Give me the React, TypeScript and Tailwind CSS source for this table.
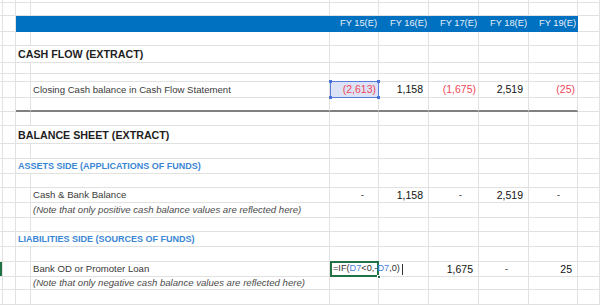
import type { ReactNode } from 'react';

// column template: row-edge | A | B | C | D..H (FY columns) | I
const GRID = 'grid grid-cols-[3px_13px_15px_299px_49px_50px_50px_50px_49px_1fr]';
const CELL = 'border-r border-b border-[#e1e1e1] min-w-0';
const THICK = 'border-r border-r-[#e1e1e1] border-b-2 border-b-[#808080] min-w-0';

function Blank({ n = 1, cls = CELL }: { n?: number; cls?: string }) {
  return (
    <>
      {Array.from({ length: n }).map((_, i) => (
        <div key={i} className={cls} />
      ))}
    </>
  );
}

function Row({ h, children }: { h: string; children?: ReactNode }) {
  return <div className={`${GRID} ${h}`}>{children ?? <Blank n={10} />}</div>;
}

// accounting style: positives leave room for the ")"
function Num({ v, neg = false }: { v: string; neg?: boolean }) {
  return (
    <div className={`${CELL} flex items-center justify-end text-[10.5px] leading-none ${neg ? 'pr-[2px] text-[#f0475a]' : 'pr-[5px] text-[#111]'}`}>
      {v}
    </div>
  );
}

function Dash({ pr }: { pr: string }) {
  return <div className={`${CELL} flex items-center justify-end text-[10px] leading-none text-[#555] ${pr}`}>-</div>;
}

function Label({ children, cls }: { children: ReactNode; cls: string }) {
  return <div className={`${CELL} flex items-center whitespace-nowrap leading-none ${cls}`}>{children}</div>;
}

export default function App() {
  const years = ['FY 15(E)', 'FY 16(E)', 'FY 17(E)', 'FY 18(E)', 'FY 19(E)'];

  return (
    <div className="w-[600px] h-[305px] overflow-hidden bg-white font-['Liberation_Sans',Arial,sans-serif]">
      <Row h="h-[3px]" />
      <Row h="h-[13px]" />

      {/* blue year header */}
      <Row h="h-[16px]">
        <Blank n={2} />
        <div className="col-span-2 bg-[#0070c0]" />
        {years.map(y => (
          <div key={y} className="bg-[#0070c0] flex items-center justify-end pr-[2px] text-[9.3px] leading-none text-[#eaf2fb]">
            {y}
          </div>
        ))}
        <Blank />
      </Row>

      <Row h="h-[14px]" />

      {/* Cash flow */}
      <Row h="h-[17px]">
        <Blank n={2} />
        <Label cls="col-span-2 pl-[2px] pt-[1px] text-[10.7px] font-bold text-[#1e1e1e]">CASH FLOW (EXTRACT)</Label>
        <Blank n={6} />
      </Row>
      <Row h="h-[11px]" />
      <Row h="h-[8px]" />
      <Row h="h-[16px]">
        <Blank n={3} />
        <Label cls="pl-[2px] text-[9.6px] text-[#3a3a3a]">Closing Cash balance in Cash Flow Statement</Label>
        <div className={`${CELL} relative`}>
          <div className="absolute left-[0px] top-[-1px] right-[-1px] bottom-[-1px] border border-[#5b7fd9] bg-[#dde3f6] flex items-center justify-end pr-[2px] text-[10.5px] leading-none text-[#f0475a]">
            (2,613)
          </div>
          <span className="absolute left-[-1px] top-[-2px] w-[3px] h-[3px] bg-[#4a73d6]" />
          <span className="absolute right-[-2px] top-[-2px] w-[3px] h-[3px] bg-[#4a73d6]" />
          <span className="absolute left-[-1px] bottom-[-2px] w-[3px] h-[3px] bg-[#4a73d6]" />
          <span className="absolute right-[-2px] bottom-[-2px] w-[3px] h-[3px] bg-[#4a73d6]" />
        </div>
        <Num v="1,158" />
        <Num v="(1,675)" neg />
        <Num v="2,519" />
        <Num v="(25)" neg />
        <Blank />
      </Row>
      <Row h="h-[14px]">
        <Blank n={2} />
        <Blank n={7} cls={THICK} />
        <Blank />
      </Row>

      {/* Balance sheet */}
      <Row h="h-[14px]" />
      <Row h="h-[18px]">
        <Blank n={2} />
        <Label cls="col-span-2 pl-[2px] pt-[1px] text-[10.7px] font-bold text-[#1e1e1e]">BALANCE SHEET (EXTRACT)</Label>
        <Blank n={6} />
      </Row>
      <Row h="h-[15px]" />
      <Row h="h-[15px]">
        <Blank n={2} />
        <Label cls="col-span-2 pl-[2px] text-[9px] font-bold text-[#3a86d4]">ASSETS SIDE (APPLICATIONS OF FUNDS)</Label>
        <Blank n={6} />
      </Row>
      <Row h="h-[14px]" />
      <Row h="h-[15px]">
        <Blank n={3} />
        <Label cls="pl-[2px] text-[9.6px] text-[#3a3a3a]">Cash &amp; Bank Balance</Label>
        <Dash pr="pr-[14px]" />
        <Num v="1,158" />
        <Dash pr="pr-[16px]" />
        <Num v="2,519" />
        <Dash pr="pr-[17px]" />
        <Blank />
      </Row>
      <Row h="h-[15px]">
        <Blank n={3} />
        <Label cls="pl-[2px] text-[9.6px] italic text-[#4a4a4a]">(Note that only positive cash balance values are reflected here)</Label>
        <Blank n={6} />
      </Row>
      <Row h="h-[14px]" />
      <Row h="h-[15px]">
        <Blank n={2} />
        <Label cls="col-span-2 pl-[2px] text-[9px] font-bold text-[#3a86d4]">LIABILITIES SIDE (SOURCES OF FUNDS)</Label>
        <Blank n={6} />
      </Row>
      <Row h="h-[15px]" />
      <Row h="h-[15px]">
        <div className={`${CELL} relative`}>
          <span className="absolute left-0 top-0 bottom-0 w-[2px] bg-[#217346]" />
        </div>
        <Blank n={2} />
        <Label cls="pl-[2px] text-[9.6px] text-[#3a3a3a]">Bank OD or Promoter Loan</Label>
        <div className={`${CELL} relative z-10 overflow-visible`}>
          <div className="absolute left-0 top-[-1px] right-[-1px] bottom-[-1px] border-2 border-[#217346]" />
          <span className="absolute right-[-3px] bottom-[-3px] w-[4px] h-[4px] bg-[#217346] border border-white" />
          <div className="absolute left-[3px] top-0 bottom-0 flex items-center whitespace-nowrap text-[9.2px] leading-none text-[#333]">
            =IF(<span className="text-[#4a80d9]">D7</span>&lt;0,-<span className="text-[#4a80d9]">D7</span>,0)
            <span className="ml-[2px] w-[1px] h-[11px] bg-[#333]" />
          </div>
        </div>
        <Blank />
        <Num v="1,675" />
        <Dash pr="pr-[20px]" />
        <Num v="25" />
        <Blank />
      </Row>
      <Row h="h-[13px]">
        <Blank n={3} />
        <Label cls="pl-[2px] text-[9.6px] italic text-[#4a4a4a]">(Note that only negative cash balance values are reflected here)</Label>
        <Blank n={6} />
      </Row>
      <Row h="h-[15px]" />
    </div>
  );
}
